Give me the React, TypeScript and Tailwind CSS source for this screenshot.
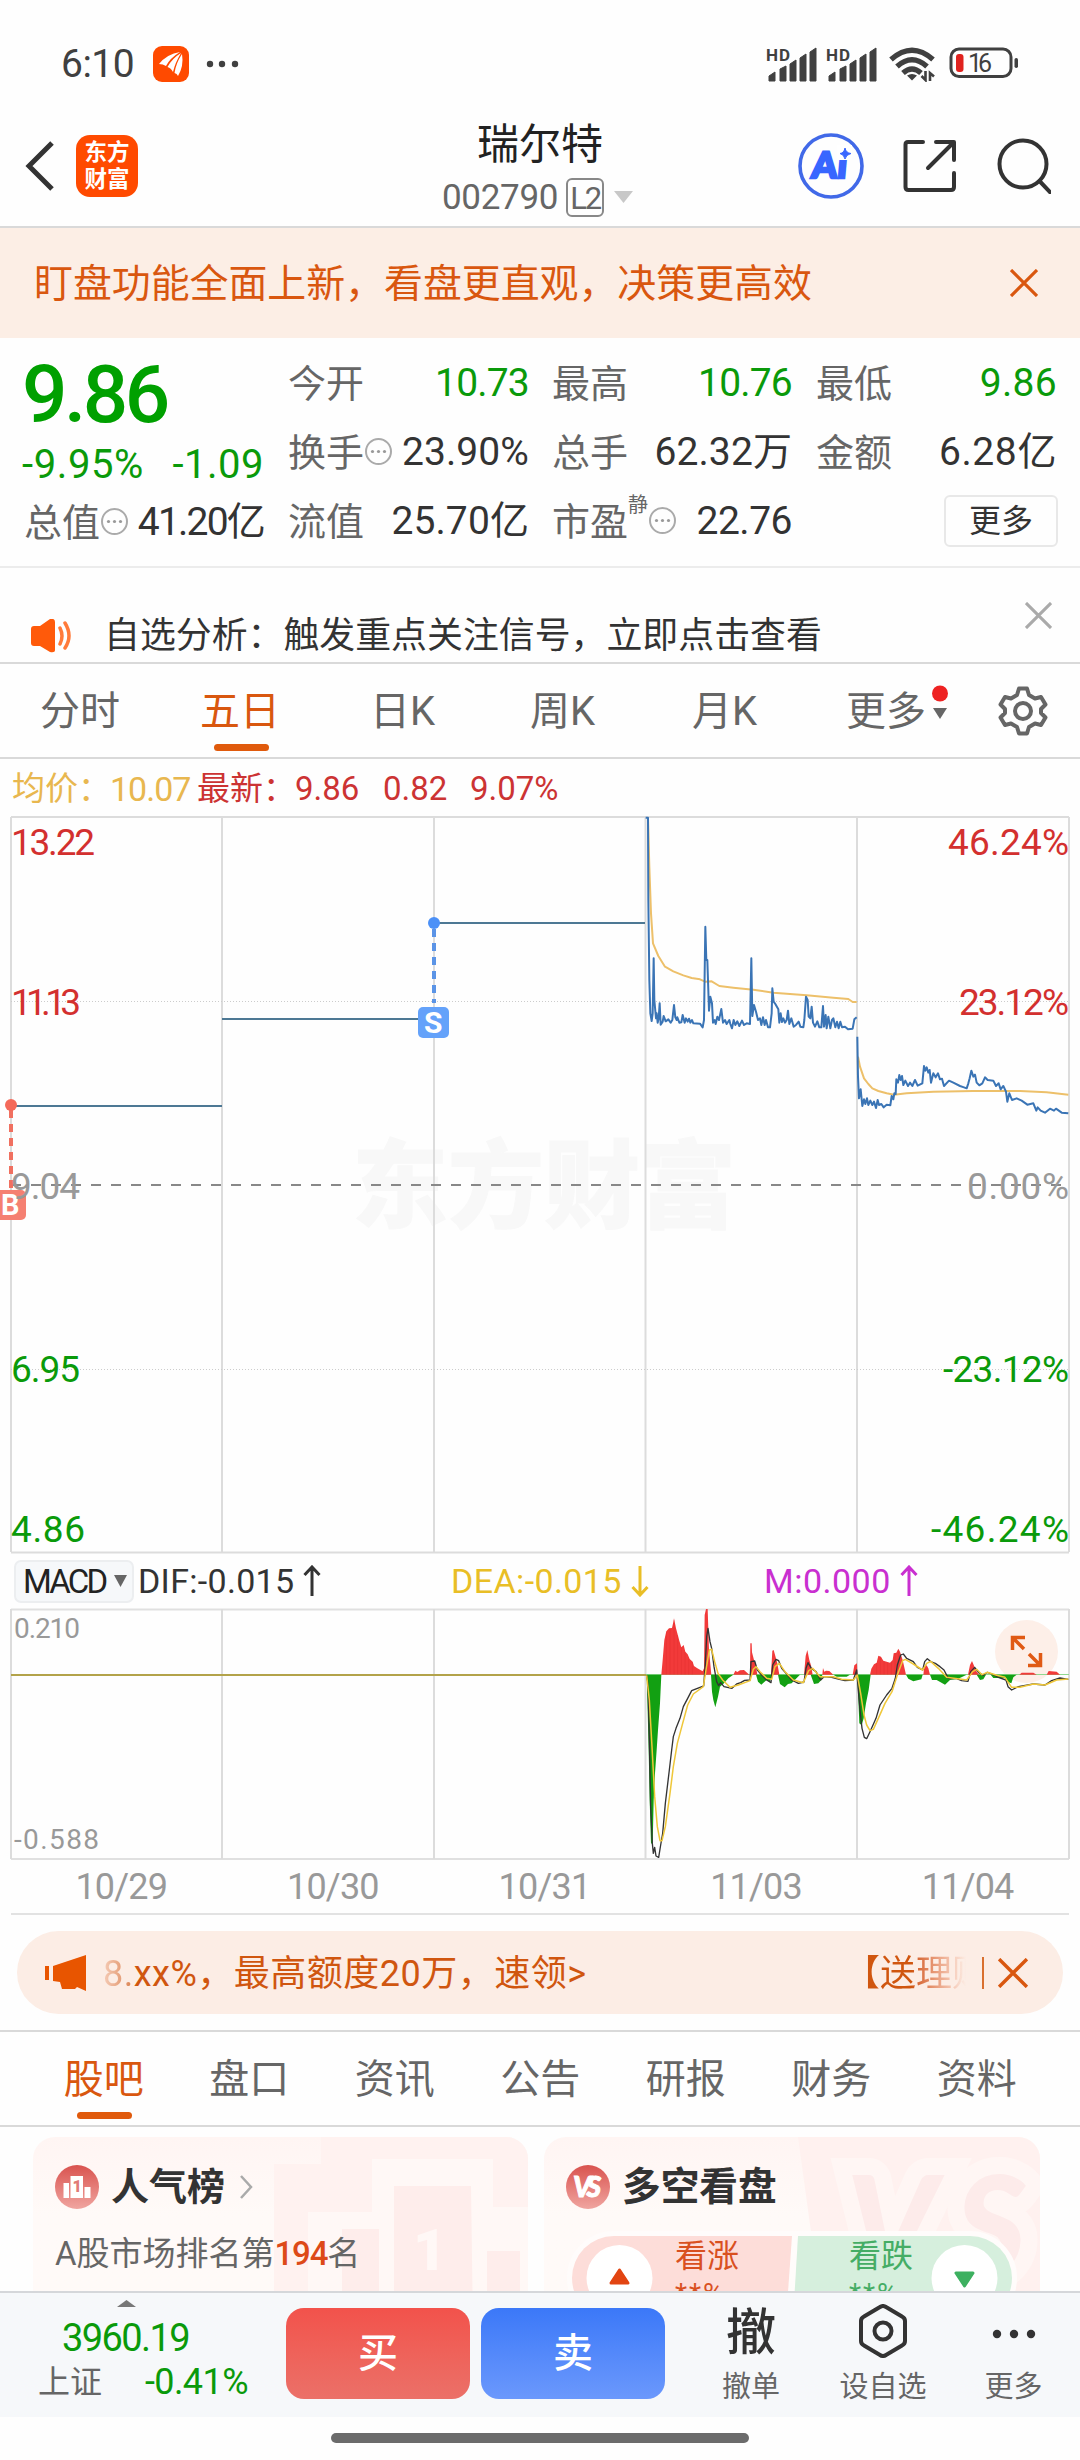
import React from "react";

const DARK = "#333333";

const Signal = () => (
  <svg width="54" height="36" viewBox="0 0 54 36" fill="#404040">
    <text x="0" y="15" fontSize="17" fontWeight="700" textLength="24" fontFamily="Roboto">HD</text>
    <path d="M3 36 V31 L9 27 V36Z M14 36 V24 L20 21 V36Z M24 36 V19 L30 15 V36Z M34 36 V13 L40 9 V36Z M44 36 V7 L50 3 V36Z" stroke="#404040" strokeWidth="1" strokeLinejoin="round" transform="translate(0 -1)" />
  </svg>
);

const Wifi = () => (
  <svg width="48" height="36" viewBox="0 0 48 36" fill="none" stroke="#404040" strokeWidth="5.4">
    <path d="M2 13.5 Q23 -5 44 13.5" />
    <path d="M8 20.5 Q23 7 38 20.5" />
    <path d="M14 27 Q23 19 32 27" />
    <path d="M18 29.5 Q23 26.5 28 29.5 L23 34.5Z" fill="#404040" stroke="none" />
    <path d="M36.5 25 V34 L32.5 30 M41 35 V27 L45 30.5" strokeWidth="2.6" />
  </svg>
);

const StatusBar = () => (
  <div className="flex items-center h-[128px] pl-[61px] pr-[61px] text-[#404040]">
    <span className="w-[92px] text-[39px] tracking-[-0.5px] leading-none">6:10</span>
    <svg width="36" height="36" viewBox="0 0 36 36">
      <rect width="36" height="36" rx="9" fill="#ff4a00" />
      <path d="M6 18 Q14 8 27 6 Q17 12 13 20 Q10 18 6 18Z" fill="#fff" />
      <path d="M14.5 21 Q19 12.5 28 7 Q22 17 20 26 Q18 22 14.5 21Z" fill="#fff" />
      <path d="M21.5 27 Q23 17 29 8 Q31 20 25 30 Q24 27.500 21.500 27Z" fill="#fff" />
    </svg>
    <svg width="34" height="8" viewBox="0 0 34 8" className="ml-[17px]" fill="#404040">
      <circle cx="4" cy="4" r="3.2" />
      <circle cx="16" cy="4" r="3.2" />
      <circle cx="29" cy="4" r="3.2" />
    </svg>
    <div className="flex ml-auto">
      <Signal />
      <div className="w-[6px]" />
      <Signal />
      <div className="w-[9px]" />
      <Wifi />
      <svg width="70" height="32" viewBox="0 0 70 32" className="ml-[12px] mt-[1px]">
        <rect x="2" y="2" width="60" height="27.5" rx="8" fill="none" stroke="#404040" strokeWidth="3" />
        <rect x="65.5" y="11" width="3.5" height="10" rx="1.7" fill="#404040" />
        <rect x="7" y="7" width="7.5" height="18" rx="3" fill="#e0221e" />
        <text x="19" y="24.5" fontSize="25" textLength="24" fill="#404040" fontFamily="Roboto">16</text>
      </svg>
    </div>
  </div>
);

const Header = () => (
  <div className="relative flex items-center h-[100px] border-b-2 border-[#d9d9d9] pb-[23px]">
    <svg width="30" height="52" viewBox="0 0 30 52" className="ml-[25px]" fill="none" stroke={DARK} strokeWidth="5">
      <path d="M27 3 L4 26 L27 49" />
    </svg>
    <div className="flex flex-col items-center justify-center ml-[21px] size-[62px] rounded-[14px] bg-[#ff4a00] text-white font-bold text-[22.5px] leading-[27px]">
      <span>东方</span>
      <span>财富</span>
    </div>
    <div className="absolute left-[442px] top-[-5px]">
      <div className="text-[42px] leading-[44px] text-[#222] pl-[35px]">瑞尔特</div>
      <div className="flex items-center h-[40px] mt-[10px] text-[#666]">
        <span className="text-[35px] leading-none tracking-[-0.3px]">002790</span>
        <span className="ml-[8px] w-[38px] h-[39px] rounded-[6px] border-2 border-[#888] text-[31px] leading-[37px] tracking-[-2px] text-center">L2</span>
        <svg width="20" height="13" className="ml-[10px]">
          <path d="M0 0 H19 L9.5 12Z" fill="#c8c8c8" />
        </svg>
      </div>
    </div>
    <div className="flex items-center ml-auto pr-[29px]">
      <svg width="66" height="66" viewBox="0 0 66 66" className="mr-[1px]">
        <circle cx="33" cy="33" r="31" fill="none" stroke="#4169e8" strokeWidth="3.6" />
        <g transform="skewX(-5)" fill="#3866ff" stroke="#3866ff" strokeWidth="2.6" fontSize="36" fontWeight="900" fontFamily="Lato">
          <text x="17" y="45" textLength="35">Ai</text>
        </g>
        <rect x="39" y="12" width="15" height="15" fill="#fff" />
        <path d="M47 15 Q48 20 53 20.5 Q48 21.5 47 26 Q46 21.5 42 20.5 Q46 20 47 15Z" fill="#3866ff" stroke="#3866ff" />
      </svg>
      <svg width="54" height="54" viewBox="0 0 54 54" className="ml-[38px]" fill="none" stroke={DARK} strokeWidth="4" strokeLinecap="round" strokeLinejoin="round">
        <path d="M20 3 H5 Q2.5 3 2.5 5.5 V48 Q2.5 51 5.5 51 H48 Q51 51 51 48 V34" />
        <path d="M33 3 H51 V21 M50 4 L25 29" />
      </svg>
      <svg width="54" height="56" viewBox="0 0 54 56" className="ml-[40px]" fill="none" stroke={DARK} strokeWidth="4" strokeLinecap="round">
        <circle cx="26" cy="26" r="23.5" />
        <path d="M42.5 43 L53 54" />
      </svg>
    </div>
  </div>
);

const Cross = ({ size, color }: { size: number; color: string }) => (
  <svg width={size} height={size} viewBox="0 0 28 28" fill="none" stroke={color} strokeWidth="3.2">
    <path d="M1 1 L27 27 M27 1 L1 27" />
  </svg>
);

const Banner = () => (
  <div className="flex items-center justify-between h-[110px] pl-[34px] pr-[42px] bg-[#fceee5] text-[#d9570f]">
    <span className="text-[38.9px] leading-none pt-[3px]">盯盘功能全面上新，看盘更直观，决策更高效</span>
    <Cross size={28} color="#d9570f" />
  </div>
);

const Tip = () => (
  <svg width="29" height="29" viewBox="0 0 29 29" className="shrink-0 -mt-[2px]" fill="#999">
    <circle cx="14.5" cy="14.5" r="12.5" fill="none" stroke="#aaa" strokeWidth="2" />
    <circle cx="8.5" cy="14.5" r="1.6" />
    <circle cx="14.5" cy="14.5" r="1.6" />
    <circle cx="20.5" cy="14.5" r="1.6" />
  </svg>
);

type CellProps = { label: string; value: string; tip?: boolean; sup?: string; tone?: string };

const Cell = ({ label, value, tip, sup, tone = "text-[#333] tracking-[0.1px]" }: CellProps) => (
  <div className="flex items-center h-[69px] text-[38px] leading-none">
    <span className="text-[#666]">{label}</span>
    {sup && <span className="text-[#666] text-[20px] -mt-[34px]">{sup}</span>}
    {tip && <Tip />}
    <span className={`ml-auto text-[39px] ${tone}`}>{value}</span>
  </div>
);

const GREEN = "text-[#0a9a0a] tracking-[-0.8px]";

const Quote = () => (
  <div className="flex h-[230px] border-b-2 border-[#ececec] pl-[24px] pt-[11px] text-nowrap">
    <div className="w-[240px]">
      <div className="h-[93px] -ml-[2px] text-[80px] leading-[92px] font-medium tracking-[-3.5px] text-[#00a000]">9.86</div>
      <div className="flex justify-between h-[46px] -ml-[2px] leading-[46px] text-[40px] text-[#0a9a0a]">
        <span className="tracking-[0.6px]">-9.95%</span>
        <span className="tracking-[0.5px]">-1.09</span>
      </div>
      <Cell label="总值" value="41.20亿" tip tone="text-[#333] tracking-[-1.8px]" />
    </div>
    <div className="w-[241px] ml-[24px]">
      <Cell label="今开" value="10.73" tone={GREEN} />
      <Cell label="换手" value="23.90%" tip />
      <Cell label="流值" value="25.70亿" />
    </div>
    <div className="w-[240px] ml-[23px]">
      <Cell label="最高" value="10.76" tone={GREEN} />
      <Cell label="总手" value="62.32万" />
      <Cell label="市盈" value="22.76" tip sup="静" tone="text-[#333] tracking-[-0.5px]" />
    </div>
    <div className="w-[241px] ml-[24px]">
      <Cell label="最低" value="9.86" tone="text-[#0a9a0a] tracking-[0.3px]" />
      <Cell label="金额" value="6.28亿" tone="text-[#333] tracking-[0.6px]" />
      <div className="flex justify-end pt-[8px]">
        <span className="w-[114px] h-[52px] -mr-[1px] rounded-[6px] border-2 border-[#e8e8e8] text-center text-[32px] leading-[48px] text-[#333]">更多</span>
      </div>
    </div>
  </div>
);

const Notice = () => (
  <div className="flex h-[96px] border-b-2 border-[#d9d9d9] pl-[31px] pr-[28px]">
    <svg width="42" height="34" viewBox="0 0 42 34" className="mt-[51px]">
      <path d="M0 10 Q0 7 3 7 H9 L19 0 Q24 -1 24 3 V31 Q24 34 19 33 L9 27 H3 Q0 27 0 24Z" fill="#ff5a0a" />
      <path d="M29 9 Q33 17 29 25 M34 4 Q42 17 34 29" fill="none" stroke="#ff7a3a" strokeWidth="3.5" strokeLinecap="round" />
    </svg>
    <span className="ml-[31px] mt-[50px] text-[35.9px] leading-[36px] text-[#333]">自选分析：触发重点关注信号，立即点击查看</span>
    <div className="ml-auto mt-[34px]">
      <Cross size={27} color="#aaaaaa" />
    </div>
  </div>
);

const ChartTabs = () => (
  <div className="relative flex items-center h-[95px] border-b-2 border-[#d9d9d9] text-[40px] leading-none text-[#666] text-nowrap">
    <span className="w-[160px] pl-[40px] pt-[3px]">分时</span>
    <div className="relative w-[170px] pl-[40px] pt-[3px] text-[#d9570f]">
      五日
      <div className="absolute left-[54px] top-[55px] w-[55px] h-[7px] rounded-full bg-[#e05a0c]" />
    </div>
    <span className="w-[160px] pl-[40px] pt-[3px]">日K</span>
    <span className="w-[162px] pl-[40px] pt-[3px]">周K</span>
    <span className="w-[154px] pl-[40px] pt-[3px]">月K</span>
    <div className="flex items-center w-[151px] pl-[40px] pt-[3px]">
      更多
      <svg width="18" height="36" viewBox="0 0 18 36" className="ml-[5px] -mt-[18px]">
        <circle cx="9" cy="8.5" r="8" fill="#ee2222" />
        <path d="M2 23 H16 L9 34Z" fill="#666" />
      </svg>
    </div>
    <svg width="50" height="50" viewBox="0 0 50 50" className="ml-[41px]" fill="none" stroke="#666" strokeWidth="4" strokeLinejoin="round">
      <path d="M21 2.5 H29 L31 9 L37 12.5 L43 11 L47.5 18.5 L43 23 V27 L47.5 31.5 L43 39 L37 37.5 L31 41 L29 47.5 H21 L19 41 L13 37.5 L7 39 L2.5 31.5 L7 27 V23 L2.5 18.5 L7 11 L13 12.5 L19 9Z" />
      <circle cx="25" cy="25" r="8" />
    </svg>
  </div>
);

const Legend = () => (
  <div className="flex items-center h-[57px] pl-[12px] pt-[2px] text-[33px] leading-none text-[#cc3333] text-nowrap">
    <span className="w-[98px] text-[#e8b74f]">均价：</span>
    <span className="w-[87px] text-[34px] tracking-[-1px] text-[#e8b74f]">10.07</span>
    <span className="w-[98px]">最新：</span>
    <span className="w-[88px]">9.86</span>
    <span className="w-[87px]">0.82</span>
    <span>9.07%</span>
  </div>
);

const columns = [11, 222, 434, 645.5, 857, 1069];

type Axis = { y: number; left: string; lw: number; right: string; rw: number; color: string };

const axis: Axis[] = [
  { y: 855, left: "13.22", lw: 84, right: "46.24%", rw: 121, color: "#d3302f" },
  { y: 1015, left: "11.13", lw: 70, right: "23.12%", rw: 110, color: "#d3302f" },
  { y: 1199, left: "9.04", lw: 69, right: "0.00%", rw: 102, color: "#999999" },
  { y: 1382, left: "6.95", lw: 69, right: "-23.12%", rw: 126, color: "#0a9a0a" },
  { y: 1542, left: "4.86", lw: 74, right: "-46.24%", rw: 138, color: "#0a9a0a" },
];

const PriceChart = () => (
  <svg width="1080" height="738" viewBox="0 816 1080 738" className="block" fontFamily="Roboto, 'Noto Sans CJK SC', sans-serif">
    <text x="352" y="1220" fontSize="96" fontWeight="900" textLength="384" fill="#f8f8f8" stroke="#f8f8f8" strokeWidth="1">东方财富</text>
    <g stroke="#dcdcdc" strokeWidth="2" fill="none">
      <path d="M11 817 H1069 M11 1552.5 H1069" />
      {columns.map((x) => (
        <path key={x} d={`M${x} 817 V1552`} />
      ))}
      <path d="M11 1001.5 H1069 M11 1369.5 H1069" stroke="#cccccc" strokeWidth="1" strokeDasharray="1 2" />
    </g>
    <path d="M11 1185 H1069" stroke="#888" strokeWidth="2" strokeDasharray="10 10" />
    <path d="M11 1106 H222 M222 1019 H434 M434 923 H645" stroke="#4d7894" strokeWidth="2" />
    <g transform="translate(620 800) scale(.33333)" fill="none" strokeLinejoin="round">
      <path d="M84 55 L88 200 L93 340 L99 430 L115 468 L135 500 L160 514 L190 526 L215 534 L240 538 L255 545 L275 544 L298 558 L340 563 L400 569 L460 578 L560 586 L640 593 L685 597 L698 606 L710 606" stroke="#edc06a" strokeWidth="6" />
      <path d="M714 770 L720 800 L732 835 L745 852 L757 865 L775 873 L800 880 L822 884 L860 880 L940 875 L1060 873 L1200 873 L1280 877 L1345 884" stroke="#edc06a" strokeWidth="6" />
      <path d="M77 53 L84 53 L85 300 L88 540 L91 640 L95 663 L98 640 L101 475 L103 600 L108 655 L110 640 L113 668 L116 655 L119 610 L122 674 L128 665 L131 648 L137 664 L145 658 L152 668 L157 660 L162 615 L166 652 L170 660 L172 652 L178 668 L184 667 L188 645 L194 668 L198 655 L203 665 L207 656 L211 668 L216 660 L220 670 L240 671 L248 682 L252 660 L254 520 L256 380 L259 480 L262 480 L267 632 L271 590 L276 610 L279 668 L284 660 L287 672 L292 650 L297 660 L304 627 L309 668 L315 660 L320 672 L328 660 L331 672 L336 685 L341 660 L346 675 L352 664 L358 678 L366 662 L372 675 L380 670 L390 672 L394 475 L397 648 L402 615 L408 635 L414 660 L420 655 L424 675 L429 652 L434 675 L438 660 L444 682 L450 682 L455 640 L457 565 L461 605 L466 612 L475 628 L478 668 L482 640 L486 666 L490 655 L495 668 L500 660 L504 632 L508 672 L514 655 L521 680 L528 675 L536 665 L541 680 L550 682 L553 660 L558 590 L563 600 L566 650 L571 655 L575 620 L579 668 L585 680 L592 664 L598 682 L604 682 L609 618 L612 680 L617 645 L620 685 L625 650 L631 685 L636 660 L640 655 L646 682 L651 665 L656 685 L661 665 L666 682 L675 680 L684 688 L698 686 L703 658 L710 652" stroke="#3a74b5" strokeWidth="6" />
      <path d="M712 710 L714 830 L717 895 L722 868 L727 918 L732 898 L736 912 L741 895 L745 915 L751 902 L757 915 L762 905 L768 924 L773 900 L777 915 L784 912 L791 922 L800 914 L811 916 L815 888 L820 898 L823 880 L827 882 L829 838 L834 848 L838 825 L842 840 L846 828 L850 855 L856 842 L864 858 L870 848 L877 858 L885 840 L893 857 L907 850 L912 798 L916 812 L920 802 L925 818 L929 810 L933 848 L940 820 L947 832 L954 820 L960 838 L966 836 L972 858 L987 842 L1000 848 L1020 858 L1032 862 L1040 865 L1045 850 L1049 835 L1054 812 L1060 830 L1065 824 L1070 848 L1078 856 L1087 850 L1095 832 L1103 840 L1120 842 L1128 858 L1136 850 L1142 868 L1150 858 L1158 875 L1162 905 L1168 880 L1176 900 L1190 895 L1205 902 L1222 914 L1240 910 L1249 932 L1253 922 L1262 932 L1275 938 L1290 926 L1302 932 L1308 926 L1325 938 L1345 940" stroke="#3a74b5" strokeWidth="6" />
    </g>
    <path d="M11 1110 V1188" stroke="#f07060" strokeWidth="4" strokeDasharray="8 6" />
    <circle cx="11" cy="1105" r="6" fill="#f46a5a" />
    <rect x="-4" y="1190" width="30" height="30" rx="5" fill="#f58072" />
    <text x="1" y="1215" fontSize="29" fontWeight="700" fill="#fff">B</text>
    <path d="M434 929 V1003" stroke="#5b94e6" strokeWidth="4" strokeDasharray="8 6" />
    <circle cx="434" cy="923" r="6" fill="#4b90f7" />
    <rect x="418" y="1007" width="31" height="31" rx="5" fill="#64a2fa" />
    <text x="424" y="1033" fontSize="30" fontWeight="700" fill="#fff">S</text>
    <g fontSize="37">
      {axis.map((a) => (
        <g key={a.y} fill={a.color}>
          <text x="11" y={a.y} textLength={a.lw}>{a.left}</text>
          <text x={1069 - a.rw} y={a.y} textLength={a.rw}>{a.right}</text>
        </g>
      ))}
    </g>
  </svg>
);

const Arrow = ({ down, color }: { down?: boolean; color: string }) => (
  <svg width="18" height="32" viewBox="0 0 18 32" className="ml-[9px]" fill="none" stroke={color} strokeWidth="3">
    <path d={down ? "M9 1 V30 M1.5 22 L9 30 L16.5 22" : "M9 31 V2 M1.5 10 L9 2 L16.5 10"} />
  </svg>
);

const MacdLegend = () => (
  <div className="flex items-center h-[54px] pl-[14px] text-[34px] leading-none text-nowrap">
    <div className="flex items-center w-[120px] h-[43px] pl-[7px] rounded-[7px] border-2 border-[#eceef0] bg-[#f6f8fa] text-[#222] text-[33px] tracking-[-2.8px]">
      MACD
      <svg width="14" height="13" className="ml-[9px]">
        <path d="M0 0 H13 L6.5 12Z" fill="#666" />
      </svg>
    </div>
    <div className="flex items-center w-[317px] pl-[4px] text-[#333] tracking-[0.3px]">
      DIF:-0.015
      <Arrow color="#333" />
    </div>
    <div className="flex items-center w-[313px] text-[#e9be26] tracking-[0.4px]">
      DEA:-0.015
      <Arrow down color="#e9be26" />
    </div>
    <div className="flex items-center text-[#c92fd0] tracking-[0.5px]">
      M:0.000
      <Arrow color="#c92fd0" />
    </div>
  </div>
);

const MacdChart = () => (
  <svg width="1080" height="252" viewBox="0 1608 1080 252" className="block" fontFamily="Roboto, sans-serif">
    <path d="M11 1609.5 H1069 M11 1859 H1069" stroke="#e0e0e0" strokeWidth="2" />
    {columns.map((x) => (
      <path key={x} d={`M${x} 1609 V1859`} stroke="#dcdcdc" strokeWidth="2" />
    ))}
    <circle cx="1026.5" cy="1651.5" r="31.5" fill="#fdefe8" />
    <path d="M11 1675 H648" stroke="#b3a34a" strokeWidth="2" />
    <path d="M646 1674.5 H1069" stroke="#8fd98f" strokeWidth="1" />
    <g transform="translate(620 1600) scale(.33333)" fill="none" strokeLinejoin="round">
      <path fill="#f23a3a" d="M124 224 L128 180 L133 120 L139 94 L147 85 L156 84 L160 66 L162 55 L168 85 L178 122 L184 142 L191 135 L196 155 L203 163 L209 177 L218 185 L222 198 L232 205 L248 214 L252 205 L254 45 L258 27 L263 27 L267 150 L274 224Z M340 224 L346 212 L352 216 L360 211 L372 210 L388 224Z M390 224 L391 130 L395 130 L396 157 L402 180 L406 190 L412 224Z M453 224 L457 152 L461 150 L467 172 L472 190 L478 224Z M552 224 L557 168 L562 150 L568 180 L573 196 L578 224Z M607 224 L609 204 L613 215 L618 212 L628 213 L640 224Z M698 224 L703 196 L711 190 L712 224Z M750 224 L754 206 L762 193 L770 188 L775 167 L783 170 L790 182 L800 185 L810 188 L818 180 L821 160 L829 158 L835 146 L840 155 L848 180 L858 224Z M910 224 L913 200 L920 196 L925 205 L930 224Z M1044 224 L1050 195 L1056 183 L1064 202 L1070 215 L1078 224Z M1198 224 L1205 218 L1240 218 L1250 224Z M1280 224 L1286 213 L1310 215 L1320 224Z" />
      <path fill="#12a012" d="M80 224 H124 L120 310 L114 390 L110 450 L105 520 L101 600 L98 732 L93 730 L89 600 L86 450Z M273 224 H340 L325 235 L312 250 L300 260 L294 290 L286 322 L280 300 L276 275Z M408 224 H455 L450 245 L440 240 L424 254 L414 245Z M474 224 H540 L528 236 L515 250 L504 252 L494 262 L480 252Z M572 224 H607 L604 240 L595 250 L582 252Z M640 224 H690 L680 230 H650Z M712 224 H752 L746 270 L738 310 L731 355 L725 376 L718 370Z M858 224 H908 L904 238 L880 244 L865 236Z M930 224 H1040 L1015 236 L990 240 L975 254 L950 240 L936 240Z M1070 224 H1098 L1090 238 L1080 240Z M1112 224 H1190 L1180 232 L1174 250 L1164 246 L1158 234 L1120 234Z" />
      <g stroke="#b80f0f" strokeWidth="1" opacity=".35">
        <path d="M139 94V224M150 86V224M162 60V224M173 105V224M184 142V224M195 155V224M206 172V224M217 186V224M770 190V224M781 172V224M792 184V224M803 188V224M814 186V224M825 160V224M836 150V224" />
      </g>
      <path d="M80 226 L84 250 L88 420 L92 620 L97 730 L100 760 L104 742 L108 768 L116 772 L122 735 L128 700 L136 610 L148 510 L155 450 L160 410 L168 385 L180 355 L190 320 L203 295 L215 272 L240 262 L251 258 L256 190 L260 110 L264 85 L270 125 L275 145 L282 200 L290 245 L296 257 L302 248 L312 260 L336 265 L350 252 L362 248 L374 241 L390 240 L393 185 L404 183 L412 210 L425 225 L440 240 L453 248 L458 195 L468 178 L476 182 L485 205 L500 222 L515 240 L535 250 L552 246 L558 205 L564 188 L574 205 L588 215 L602 240 L612 230 L635 232 L655 237 L675 242 L700 240 L710 210 L714 260 L720 330 L726 385 L733 412 L740 416 L750 395 L768 355 L780 315 L800 285 L816 265 L826 235 L832 195 L842 165 L850 162 L860 175 L880 185 L892 202 L908 210 L914 185 L922 176 L934 186 L946 190 L960 200 L972 210 L985 235 L1010 236 L1025 242 L1044 244 L1052 215 L1064 202 L1076 218 L1090 226 L1102 217 L1120 224 L1135 232 L1158 240 L1164 260 L1175 270 L1195 260 L1240 252 L1275 255 L1295 242 L1320 234 L1345 238" stroke="#333" strokeWidth="4" />
      <path d="M80 226 L88 300 L96 440 L104 590 L112 680 L120 722 L126 722 L136 680 L150 580 L160 500 L172 430 L188 370 L203 315 L220 282 L250 260 L258 210 L268 150 L275 148 L284 185 L294 220 L308 240 L330 262 L355 255 L390 242 L400 208 L408 200 L420 215 L440 235 L455 238 L465 200 L478 190 L495 215 L520 240 L550 248 L566 212 L578 205 L600 230 L640 230 L665 238 L700 240 L712 225 L722 280 L732 345 L740 375 L750 392 L760 388 L775 355 L795 310 L816 275 L832 225 L848 182 L856 178 L880 192 L908 210 L920 190 L932 184 L955 205 L980 232 L1040 240 L1058 215 L1070 208 L1086 224 L1102 217 L1130 226 L1155 232 L1175 262 L1200 262 L1240 252 L1275 255 L1310 240 L1345 237" stroke="#efc739" strokeWidth="4.5" />
    </g>
    <g fill="none" stroke="#e05a14" strokeWidth="3.5">
      <path d="M1012.5 1650 V1637.5 H1025 M1013 1638 L1024 1649" />
      <path d="M1040.5 1653 V1665.5 H1028 M1040 1665 L1029 1654" />
    </g>
    <g fontSize="28" fill="#999">
      <text x="14" y="1638" textLength="66">0.210</text>
      <text x="14" y="1849" textLength="85">-0.588</text>
    </g>
  </svg>
);

const dates = ["10/29", "10/30", "10/31", "11/03", "11/04"];

const Dates = () => (
  <div className="flex h-[55px] mx-[11px] border-b-2 border-[#e2e2e2] text-[36px] leading-[55px] text-[#999]">
    {dates.map((d) => (
      <span key={d} className="flex-1 pl-[9px] text-center tracking-[-0.8px]">{d}</span>
    ))}
  </div>
);

const Promo = () => (
  <div className="flex items-center h-[83px] mx-[17px] mt-[16px] pl-[28px] rounded-full bg-[#fcede5] text-[36px] leading-none text-[#d0560f] text-nowrap">
    <svg width="42" height="36" viewBox="0 0 42 36" fill="#e85500">
      <path d="M0 11 H4 V25 H0Z M8 11 L41 0 V36 L32 32 L30 34 H17 L15 27 L8 26Z" />
    </svg>
    <div className="flex ml-[16px] pt-[3px] tracking-[0.5px]">
      <span className="text-transparent bg-clip-text bg-linear-to-r from-[#f5cdb8] to-[#d9804d] leading-[44px]">8.</span>
      <span className="leading-[44px]">xx%，最高额度20万，速领&gt;</span>
    </div>
    <span className="ml-auto w-[121px] pt-[3px] -indent-[1px] overflow-hidden text-transparent bg-clip-text bg-linear-to-r from-[#d0560f] from-55% to-[#fcede5] leading-[44px]">【送理财</span>
    <div className="w-[2px] h-[32px] ml-[16px] mr-[14px] bg-[#d9702f]" />
    <div className="mr-[35px]">
      <Cross size={30} color="#d9570f" />
    </div>
  </div>
);

const sections = ["股吧", "盘口", "资讯", "公告", "研报", "财务", "资料"];

const SectionTabs = () => (
  <div className="flex items-center h-[97px] mt-[16px] pl-[31px] pt-[2px] border-y-2 border-[#d9d9d9] text-[40px] leading-none text-[#666]">
    {sections.map((s, i) => (
      <div key={s} className={i === 0 ? "relative w-[145.5px] text-center text-[#d9570f]" : "w-[145.5px] text-center"}>
        {s}
        {i === 0 && <div className="absolute left-[46px] top-[52px] w-[55px] h-[7px] rounded-full bg-[#e05a0c]" />}
      </div>
    ))}
  </div>
);

const RankCard = () => (
  <div className="relative w-[495px] h-[190px] rounded-[22px] overflow-hidden bg-linear-to-b from-[#fff5f3] to-[#fffaf8] to-40%">
    <svg width="495" height="190" className="absolute inset-0">
      <path d="M288 0 H495 V190 H241 V27 H288Z" fill="#fff2f0" />
      <path d="M339 22 H460 V70 H495 V190 H275 V75 H339Z" fill="#fff8f6" />
      <path d="M361 49 H438 L440 190 H361Z M309 92 H346 V190 H309Z M454 114 H487 V190 H454Z" fill="#feedeb" />
      <text x="380" y="133" fontSize="58" fontWeight="900" fill="#fff8f6" fontFamily="Roboto">1</text>
    </svg>
    <div className="relative flex items-center h-[44px] mt-[28px] ml-[22px]">
      <svg width="44" height="44" viewBox="0 0 44 44">
        <defs>
          <linearGradient id="badge" x1="0" y1="0" x2="0" y2="1">
            <stop offset="0" stopColor="#d9534f" />
            <stop offset="1" stopColor="#f0a5a0" />
          </linearGradient>
        </defs>
        <circle cx="22" cy="22" r="22" fill="url(#badge)" />
        <path d="M8.5 18 H14 V33 H8.5Z M15.5 11 H28 V33 H15.5Z M29.5 22 H35.5 V33 H29.5Z" fill="#fff" />
        <text x="17.5" y="27" fontSize="16" fontWeight="900" fill="#e07b76" fontFamily="Roboto">1</text>
      </svg>
      <span className="ml-[12px] text-[38px] leading-none font-bold text-[#333]">人气榜</span>
      <svg width="15" height="24" viewBox="0 0 15 24" className="ml-[14px]" fill="none" stroke="#aaa" strokeWidth="2.5">
        <path d="M2 1 L12 12 L2 23" />
      </svg>
    </div>
    <div className="relative mt-[25px] ml-[22px] text-[33px] leading-[40px] text-[#666]">
      A股市场排名第<span className="font-medium text-[#dd4a18] tracking-[-1.2px]">194</span>名
    </div>
  </div>
);

const VoteCard = () => (
  <div className="relative w-[496px] h-[190px] ml-[16px] rounded-[22px] overflow-hidden bg-linear-to-b from-[#fff5f3] to-[#fffaf8] to-40%">
    <svg width="496" height="190" className="absolute inset-0">
      <path d="M254 0 H496 V190 H280Z" fill="#fff1ef" />
      <text x="302" y="138" fontSize="138" fontWeight="900" fontStyle="italic" textLength="180" fill="#fdebea" stroke="#fff6f4" strokeWidth="34" paintOrder="stroke" fontFamily="Lato">VS</text>
    </svg>
    <div className="relative flex items-center h-[44px] mt-[28px] ml-[22px]">
      <svg width="44" height="44" viewBox="0 0 44 44">
        <circle cx="22" cy="22" r="22" fill="url(#badge)" />
        <text x="7" y="32" fontSize="28" fontWeight="900" fontStyle="italic" textLength="28" fill="#fff" stroke="#fff" fontFamily="Lato">VS</text>
      </svg>
      <span className="ml-[12px] text-[38.7px] leading-none font-bold text-[#333]">多空看盘</span>
    </div>
    <div className="relative flex w-[450px] h-[94px] mt-[22px] ml-[23px] rounded-full border-[5px] border-[#fffcfb] bg-[#fffcfb] overflow-hidden text-[32px] text-nowrap">
      <svg width="440" height="84" className="absolute inset-0">
        <path d="M0 0 H220 L214 84 H0Z" fill="#fdddd9" />
        <path d="M226 0 H440 V84 H221Z" fill="#d6efdd" />
        <circle cx="47.5" cy="42" r="33" fill="#fff" />
        <path d="M47.5 34 L56 47 H39Z" fill="#e24512" stroke="#e24512" strokeWidth="3" strokeLinejoin="round" />
        <circle cx="392.5" cy="42" r="33" fill="#fff" />
        <path d="M392.5 50 L384 37 H401Z" fill="#3db060" stroke="#3db060" strokeWidth="3" strokeLinejoin="round" />
      </svg>
      <div className="relative ml-[103px] w-[174px] text-[#d9501f]">
        <div className="leading-[41px]">看涨</div>
        <div className="text-[28px] leading-[34px] tracking-[2px]">**%</div>
      </div>
      <div className="relative text-[#45ad65]">
        <div className="leading-[41px]">看跌</div>
        <div className="text-[28px] leading-[34px] tracking-[2px]">**%</div>
      </div>
    </div>
  </div>
);

const BottomBar = () => (
  <div className="flex h-[126px] border-t-2 border-[#d5d7da] bg-[#f6f8fa] leading-none text-nowrap">
    <div className="w-[286px] pt-[7px] text-[#0a9a0a]">
      <svg width="20" height="8" className="ml-[117px]">
        <path d="M9.5 0 L19 7 H0Z" fill="#777" />
      </svg>
      <div className="pl-[62px] mt-[7px] text-[38px] leading-[46px] tracking-[-1.6px]">3960.19</div>
      <div className="flex items-center pl-[38px] mt-[5px] h-[32px] text-[36px]">
        <span className="w-[107px] text-[32px] text-[#666]">上证</span>
        <span className="tracking-[-0.6px]">-0.41%</span>
      </div>
    </div>
    <div className="flex items-center justify-center w-[184px] h-[91px] mt-[15px] rounded-[18px] bg-linear-to-b from-[#f2524b] to-[#eb7068] text-[40px] text-white font-medium">买</div>
    <div className="flex items-center justify-center w-[184px] h-[91px] mt-[15px] ml-[11px] rounded-[18px] bg-linear-to-b from-[#3b78f8] to-[#6b98fc] text-[40px] text-white font-medium">卖</div>
    <div className="flex flex-col items-center w-[172px] text-[29px] text-[#666]">
      <span className="h-[80px] pt-[15px] text-[50px] font-medium text-[#333]">撤</span>
      撤单
    </div>
    <div className="flex flex-col items-center w-[92px] text-[29px] text-[#666]">
      <svg width="50" height="54" viewBox="0 0 50 54" className="mt-[11px] mb-[15px]" fill="none" stroke={DARK} strokeWidth="4" strokeLinejoin="round">
        <path d="M22 3 Q25 1 28 3 L44 12.5 Q47 14 47 17 V37 Q47 40 44 41.5 L28 51 Q25 53 22 51 L6 41.5 Q3 40 3 37 V17 Q3 14 6 12.5Z" />
        <circle cx="25" cy="27" r="8.5" />
      </svg>
      设自选
    </div>
    <div className="flex flex-col items-center w-[151px] pl-[18px] text-[29px] text-[#666]">
      <svg width="44" height="10" viewBox="0 0 44 10" className="mt-[36px] mb-[34px]" fill={DARK}>
        <circle cx="5" cy="5" r="4.2" />
        <circle cx="22" cy="5" r="4.2" />
        <circle cx="39" cy="5" r="4.2" />
      </svg>
      更多
    </div>
  </div>
);

const App = () => {
  return (
    <main className="w-[1080px] h-[2460px] overflow-hidden bg-[#fefefe] font-[Roboto,'Noto_Sans_CJK_SC',sans-serif]">
      <StatusBar />
      <Header />
      <Banner />
      <Quote />
      <Notice />
      <ChartTabs />
      <Legend />
      <PriceChart />
      <MacdLegend />
      <MacdChart />
      <Dates />
      <Promo />
      <SectionTabs />
      <div className="flex h-[164px] pt-[10px] pl-[33px] overflow-hidden">
        <RankCard />
        <VoteCard />
      </div>
      <BottomBar />
      <div className="w-[418px] h-[10px] mt-[16px] mx-auto rounded-full bg-[#6b6b6b]" />
    </main>
  );
};

export default App;
